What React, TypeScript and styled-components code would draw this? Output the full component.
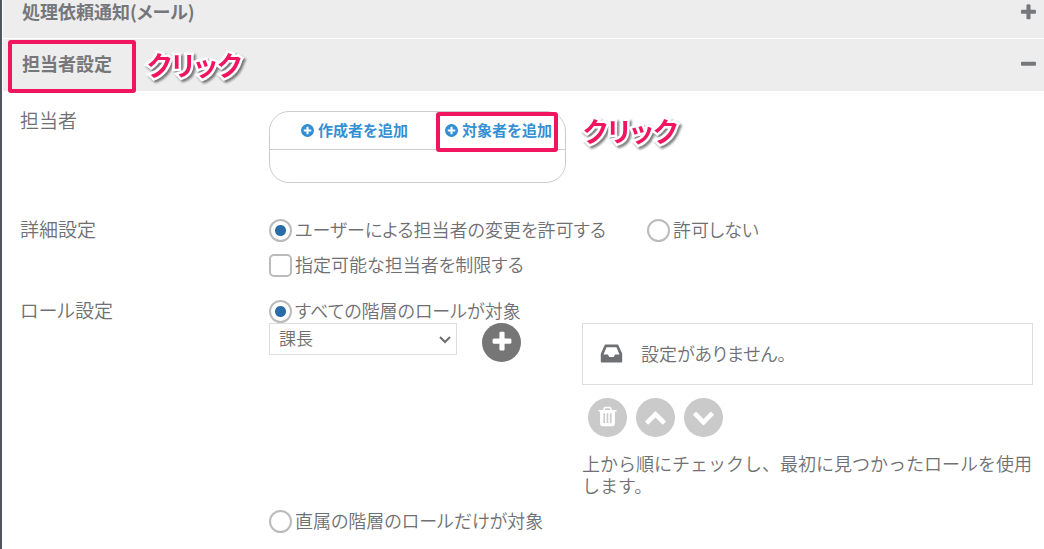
import React from "react";
import styled, { createGlobalStyle } from "styled-components";

const GlobalStyle = createGlobalStyle`
  *, *::before, *::after { box-sizing: border-box; }
  body {
    margin: 0;
    background: #fff;
    color: #6f7073;
    font-family: "Noto Sans CJK JP", sans-serif;
    font-size: 18px;
    font-weight: 350;
    line-height: 22px;
    font-feature-settings: "palt";
    overflow-x: hidden;
  }
  button, select, input { font: inherit; color: inherit; margin: 0; font-feature-settings: inherit; }
`;

const icons = {
  plus: "M1600 736v192q0 40-28 68t-68 28h-416v416q0 40-28 68t-68 28h-192q-40 0-68-28t-28-68v-416h-416q-40 0-68-28t-28-68v-192q0-40 28-68t68-28h416v-416q0-40 28-68t68-28h192q40 0 68 28t28 68v416h416q40 0 68 28t28 68z",
  minus: "M1600 736v192q0 40-28 68t-68 28h-1216q-40 0-68-28t-28-68v-192q0-40 28-68t68-28h1216q40 0 68 28t28 68z",
  plusCircle:
    "M1344 960v-128q0-26-19-45t-45-19h-256v-256q0-26-19-45t-45-19h-128q-26 0-45 19t-19 45v256h-256q-26 0-45 19t-19 45v128q0 26 19 45t45 19h256v256q0 26 19 45t45 19h128q26 0 45-19t19-45v-256h256q26 0 45-19t19-45zm320-64q0 209-103 385.5t-279.5 279.5-385.5 103-385.5-103-279.5-279.5-103-385.5 103-385.5 279.5-279.5 385.5-103 385.5 103 279.5 279.5 103 385.5z",
  trash:
    "M704 1376v-704q0-14-9-23t-23-9h-64q-14 0-23 9t-9 23v704q0 14 9 23t23 9h64q14 0 23-9t9-23zm256 0v-704q0-14-9-23t-23-9h-64q-14 0-23 9t-9 23v704q0 14 9 23t23 9h64q14 0 23-9t9-23zm256 0v-704q0-14-9-23t-23-9h-64q-14 0-23 9t-9 23v704q0 14 9 23t23 9h64q14 0 23-9t9-23zm-544-992h448l-48-117q-7-9-17-11h-317q-10 2-17 11zm928 32v64q0 14-9 23t-23 9h-96v948q0 83-47 143.5t-113 60.5h-832q-66 0-113-58.5t-47-141.5v-952h-96q-14 0-23-9t-9-23v-64q0-14 9-23t23-9h309l70-167q15-37 54-63t79-26h320q40 0 79 26t54 63l70 167h309q14 0 23 9t9 23z",
  inbox:
    "M1151 960h316q-1-3-2.5-8t-2.5-8l-212-496h-708l-212 496q-1 2-2.5 8t-2.5 8h316l95 192h320zm513 30v482q0 26-19 45t-45 19h-1408q-26 0-45-19t-19-45v-482q0-62 25-123l238-552q10-25 36.5-42t52.5-17h832q26 0 52.5 17t36.5 42l238 552q25 61 25 123z",
  up: "M1683 1331l-166 165q-19 19-45 19t-45-19l-531-531-531 531q-19 19-45 19t-45-19l-166-165q-19-19-19-45.5t19-45.5l742-741q19-19 45-19t45 19l742 741q19 19 19 45.5t-19 45.5z",
  down: "M1683 808l-742 741q-19 19-45 19t-45-19l-742-741q-19-19-19-45.5t19-45.5l166-165q19-19 45-19t45 19l531 531 531-531q19-19 45-19t45 19l166 165q19 19 19 45.5t-19 45.5z",
};

const Svg = styled.svg`
  display: block;
  flex: none;
  fill: currentColor;
`;

function Icon({ name, size }: { name: keyof typeof icons; size: number }) {
  return (
    <Svg width={size} height={size} viewBox="0 0 1792 1792" aria-hidden="true">
      <path d={icons[name]} />
    </Svg>
  );
}

const Page = styled.main`
  min-height: 100vh;
  border-left: 2px solid #50565e;
  padding-left: 1px;
`;

const SectionHeader = styled.h2<{ $first?: boolean }>`
  position: relative;
  margin: 0 0 ${(p) => (p.$first ? 1 : 0)}px;
  background: #ededed;
  color: #76777a;
  font-size: 18px;
  font-weight: 700;
  line-height: 20px;
`;

const HeaderButton = styled.button<{ $first?: boolean }>`
  display: flex;
  align-items: center;
  justify-content: space-between;
  width: 100%;
  height: ${(p) => (p.$first ? 38 : 52)}px;
  padding: 0 6px ${(p) => (p.$first ? 16 : 4)}px 19px;
  border: 0;
  background: none;
  text-align: left;
  cursor: pointer;
  ${Svg} { margin-top: 2px; }
`;

const Highlight = styled.span<{ $inset: string; $width?: string }>`
  position: absolute;
  inset: ${(p) => p.$inset};
  width: ${(p) => p.$width ?? "auto"};
  border: 4px solid #f1145f;
  border-radius: 3px;
  pointer-events: none;
`;

const Callout = styled.span<{ $left: number; $top: number }>`
  position: absolute;
  left: ${(p) => p.$left}px;
  top: ${(p) => p.$top}px;
  color: #f1145f;
  font-size: 27px;
  font-weight: 700;
  line-height: 40px;
  white-space: nowrap;
  -webkit-text-stroke: 5px #fff;
  paint-order: stroke fill;
  filter: drop-shadow(2px 2px 1px rgba(0, 0, 0, 0.5));
  pointer-events: none;
`;

const Body = styled.div`
  display: flex;
  flex-direction: column;
  padding: 19px 11px 17px 17px;
`;

const Row = styled.section<{ $gap: number }>`
  display: grid;
  grid-template-columns: 249px minmax(0, 1fr);
  margin-bottom: ${(p) => p.$gap}px;
`;

const RowLabel = styled.h3`
  margin: 0;
  font-size: 19px;
  font-weight: 350;
  line-height: 20px;
`;

const AssigneeArea = styled.div`
  position: relative;
  width: 297px;
  margin-top: 1px;
`;

const AssigneeBox = styled.div`
  height: 72px;
  border: 1px solid #ccc;
  border-radius: 20px;
`;

const AssigneeActions = styled.div`
  display: flex;
  justify-content: flex-end;
  gap: 36px;
  height: 38px;
  padding: 0 13px 2px 0;
  border-bottom: 1px solid #ccc;
`;

const AddLink = styled.button`
  display: flex;
  align-items: center;
  gap: 3px;
  padding: 0;
  border: 0;
  background: none;
  color: #3490d2;
  font-size: 15px;
  font-weight: 700;
  white-space: nowrap;
  font-feature-settings: normal;
  cursor: pointer;
  ${Svg} { margin-top: 2px; }
`;

const Options = styled.div`
  display: flex;
  flex-direction: column;
  gap: 12px;
`;

const OptionLine = styled.div`
  display: flex;
  gap: 41px;
`;

const Option = styled.label`
  display: flex;
  align-items: flex-start;
  gap: 3px;
  height: 23px;
  line-height: 20px;
  white-space: nowrap;
`;

const Mark = styled.input`
  appearance: none;
  flex: none;
  width: 23px;
  height: 23px;
  border: 2px solid #bbb;
  background: #fff;
  &[type="radio"] { border-radius: 50%; }
  &[type="checkbox"] { border-radius: 5px; }
  &[type="radio"]:checked {
    background: radial-gradient(circle, #2a6ca8 5px, #fff 6px);
  }
`;

const RoleGrid = styled.div`
  display: grid;
  grid-template-columns: 313px minmax(0, 1fr);
`;

const RolePicker = styled.div`
  display: flex;
  align-items: flex-start;
  gap: 25px;
`;

const SelectWrap = styled.div`
  position: relative;
  width: 188px;
`;

const Select = styled.select`
  display: block;
  appearance: none;
  width: 100%;
  height: 32px;
  padding: 0 28px 2px 9px;
  border: 1px solid #ddd;
  border-radius: 0;
  background: #fff;
  font-size: 17px;
`;

const Arrow = styled.svg`
  position: absolute;
  right: 6px;
  top: 13px;
  fill: none;
  stroke: #6c6d70;
  stroke-width: 2;
  pointer-events: none;
`;

const RoundButton = styled.button<{ $muted?: boolean }>`
  display: flex;
  align-items: center;
  justify-content: center;
  width: 39px;
  height: 39px;
  padding: 0 0 2px;
  border: 0;
  border-radius: 50%;
  background: ${(p) => (p.$muted ? "#cacaca" : "#767676")};
  color: #fff;
`;

const EmptyPanel = styled.div`
  display: flex;
  align-items: center;
  gap: 17px;
  height: 62px;
  padding: 0 16px 2px;
  border: 1px solid #ddd;
`;

const Tools = styled.div`
  display: flex;
  gap: 9px;
  padding: 13px 6px 15px;
`;

const Note = styled.p`
  margin: 0 0 14px;
  line-height: 22px;
  font-feature-settings: normal;
`;

export default function App() {
  return (
    <>
      <GlobalStyle />
      <Page>
        <SectionHeader $first>
          <HeaderButton $first type="button" aria-expanded="false">
            処理依頼通知(メール)
            <Icon name="plus" size={19} />
          </HeaderButton>
        </SectionHeader>
        <SectionHeader>
          <HeaderButton type="button" aria-expanded="true">
            担当者設定
            <Icon name="minus" size={19} />
          </HeaderButton>
          <Highlight $inset="1px auto -2px 5px" $width="128px" />
          <Callout $left={144} $top={6}>クリック</Callout>
        </SectionHeader>

        <Body>
          <Row $gap={36}>
            <RowLabel>担当者</RowLabel>
            <AssigneeArea>
              <AssigneeBox>
                <AssigneeActions>
                  <AddLink type="button">
                    <Icon name="plusCircle" size={15} />
                    作成者を追加
                  </AddLink>
                  <AddLink type="button">
                    <Icon name="plusCircle" size={15} />
                    対象者を追加
                  </AddLink>
                </AssigneeActions>
              </AssigneeBox>
              <Highlight $inset="1px 8px 31px 167px" />
              <Callout $left={314} $top={0}>クリック</Callout>
            </AssigneeArea>
          </Row>

          <Row $gap={23}>
            <RowLabel>詳細設定</RowLabel>
            <Options>
              <OptionLine>
                <Option>
                  <Mark type="radio" name="change" defaultChecked />
                  ユーザーによる担当者の変更を許可する
                </Option>
                <Option>
                  <Mark type="radio" name="change" />
                  許可しない
                </Option>
              </OptionLine>
              <Option>
                <Mark type="checkbox" />
                指定可能な担当者を制限する
              </Option>
            </Options>
          </Row>

          <Row $gap={0}>
            <RowLabel>ロール設定</RowLabel>
            <div>
              <Option>
                <Mark type="radio" name="role" defaultChecked />
                すべての階層のロールが対象
              </Option>
              <RoleGrid>
                <RolePicker>
                  <SelectWrap>
                    <Select aria-label="ロール">
                      <option>課長</option>
                    </Select>
                    <Arrow width="12" height="8" viewBox="0 0 12 8" aria-hidden="true">
                      <path d="M1 1l5 5 5-5" />
                    </Arrow>
                  </SelectWrap>
                  <RoundButton type="button" aria-label="追加">
                    <Icon name="plus" size={24} />
                  </RoundButton>
                </RolePicker>
                <div>
                  <EmptyPanel>
                    <Icon name="inbox" size={25} />
                    設定がありません。
                  </EmptyPanel>
                  <Tools>
                    <RoundButton $muted type="button" aria-label="削除">
                      <Icon name="trash" size={23} />
                    </RoundButton>
                    <RoundButton $muted type="button" aria-label="上へ">
                      <Icon name="up" size={23} />
                    </RoundButton>
                    <RoundButton $muted type="button" aria-label="下へ">
                      <Icon name="down" size={23} />
                    </RoundButton>
                  </Tools>
                  <Note>上から順にチェックし、最初に見つかったロールを使用します。</Note>
                </div>
              </RoleGrid>
              <Option>
                <Mark type="radio" name="role" />
                直属の階層のロールだけが対象
              </Option>
            </div>
          </Row>
        </Body>
      </Page>
    </>
  );
}
